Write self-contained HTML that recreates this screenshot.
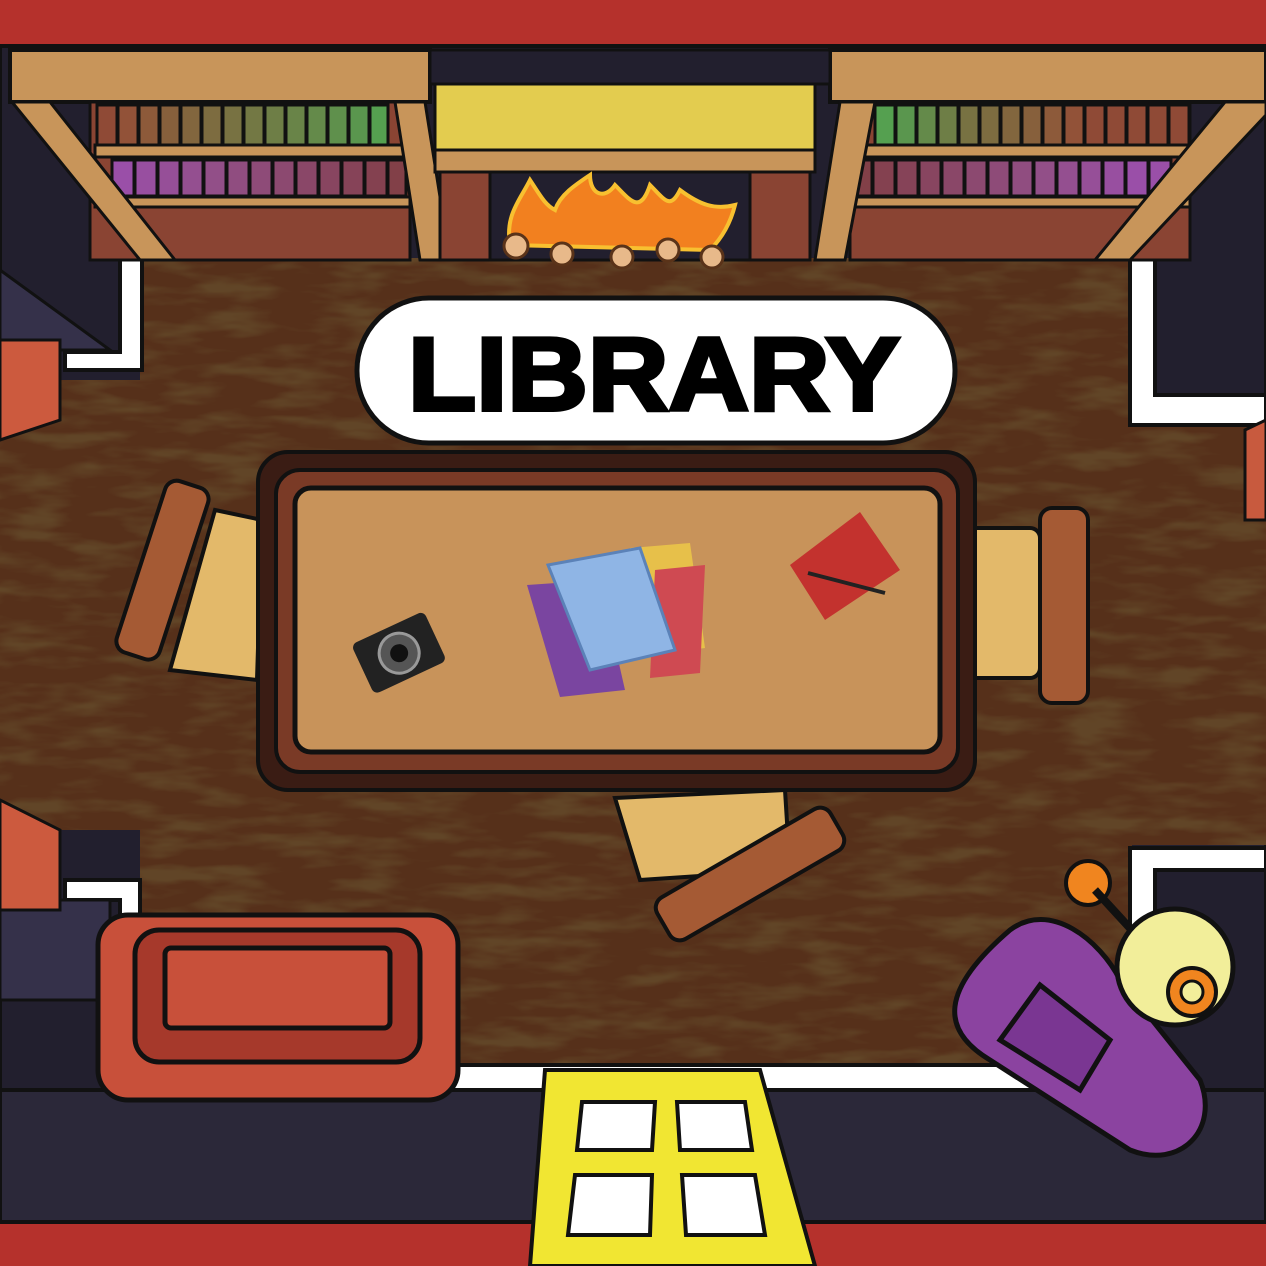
<!DOCTYPE html>
<html><head><meta charset="utf-8"><style>html,body{margin:0;padding:0;background:#b5312c}svg{display:block}</style></head><body>
<svg width="1266" height="1266" viewBox="0 0 1266 1266" xmlns="http://www.w3.org/2000/svg">
<defs>
<filter id="wood" x="0" y="0" width="100%" height="100%">
<feTurbulence type="fractalNoise" baseFrequency="0.015 0.06" numOctaves="3" seed="4"/>
<feColorMatrix type="matrix" values="0 0 0 0 0.12  0 0 0 0 0.06  0 0 0 0 0.02  0 0 0 3 -1.3"/>
</filter>
</defs>
<rect width="1266" height="1266" fill="#b5312c"/>
<rect x="0" y="45" width="1266" height="1193" fill="#221f2e" stroke="#111" stroke-width="4"/>
<rect x="140" y="258" width="992" height="815" fill="#56301a"/>
<rect x="140" y="258" width="992" height="815" filter="url(#wood)"/>
<rect x="0" y="380" width="140" height="450" fill="#56301a"/>
<rect x="0" y="380" width="140" height="450" filter="url(#wood)"/>
<rect x="1132" y="425" width="134" height="420" fill="#56301a"/>
<rect x="1132" y="425" width="134" height="420" filter="url(#wood)"/>
<path d="M120 240 L142 258 L142 370 L65 370 L65 352 L120 352Z" fill="#fff" stroke="#111" stroke-width="4"/>
<path d="M1130 258 L1155 240 L1155 395 L1266 395 L1266 425 L1130 425Z" fill="#fff" stroke="#111" stroke-width="4"/>
<path d="M1130 848 L1266 848 L1266 870 L1155 870 L1155 1060 L1130 1075Z" fill="#fff" stroke="#111" stroke-width="4"/>
<path d="M65 880 L140 880 L140 1075 L120 1075 L120 900 L65 900Z" fill="#fff" stroke="#111" stroke-width="4"/>
<path d="M140 1065 L1150 1065 L1150 1090 L140 1090Z" fill="#fff" stroke="#111" stroke-width="4"/>
<rect x="0" y="1090" width="1266" height="150" fill="#2b2839" stroke="#111" stroke-width="4"/>
<rect x="0" y="1222" width="1266" height="44" fill="#b5312c"/>
<line x1="0" y1="1222" x2="1266" y2="1222" stroke="#111" stroke-width="4"/>
<path d="M0 270 L110 350 L0 350Z" fill="#35314a" stroke="#111" stroke-width="3"/>
<path d="M0 900 L110 900 L110 1000 L0 1000Z" fill="#35314a" stroke="#111" stroke-width="3"/>
<path d="M0 340 L60 340 L60 420 L0 440Z" fill="#cc5a3e" stroke="#111" stroke-width="3"/>
<path d="M0 800 L60 830 L60 910 L0 910Z" fill="#cc5a3e" stroke="#111" stroke-width="3"/>
<path d="M1266 420 L1245 430 L1245 520 L1266 520Z" fill="#c85a3e" stroke="#111" stroke-width="3"/>
<rect x="10" y="50" width="420" height="52" fill="#c8955a" stroke="#111" stroke-width="4"/>
<rect x="830" y="50" width="436" height="52" fill="#c8955a" stroke="#111" stroke-width="4"/>
<rect x="90" y="102" width="320" height="158" fill="#8a4433" stroke="#111" stroke-width="3"/>
<rect x="850" y="102" width="340" height="158" fill="#8a4433" stroke="#111" stroke-width="3"/>
<g stroke="#111" stroke-width="3">
<rect x="97" y="105" width="20" height="40" fill="#8f4a36"/><rect x="118" y="105" width="20" height="40" fill="#925238"/><rect x="139" y="105" width="20" height="40" fill="#8d5a3a"/><rect x="160" y="105" width="20" height="40" fill="#87603c"/><rect x="181" y="105" width="20" height="40" fill="#82663e"/><rect x="202" y="105" width="20" height="40" fill="#7d6c40"/><rect x="223" y="105" width="20" height="40" fill="#787242"/><rect x="244" y="105" width="20" height="40" fill="#737844"/><rect x="265" y="105" width="20" height="40" fill="#6e7e46"/><rect x="286" y="105" width="20" height="40" fill="#698448"/><rect x="307" y="105" width="20" height="40" fill="#648a4a"/><rect x="328" y="105" width="20" height="40" fill="#5f904c"/><rect x="349" y="105" width="20" height="40" fill="#5a964e"/><rect x="370" y="105" width="18" height="40" fill="#55a050"/>
<rect x="875" y="105" width="20" height="40" fill="#55a050"/><rect x="896" y="105" width="20" height="40" fill="#5a964e"/><rect x="917" y="105" width="20" height="40" fill="#648a4a"/><rect x="938" y="105" width="20" height="40" fill="#6e7e46"/><rect x="959" y="105" width="20" height="40" fill="#787242"/><rect x="980" y="105" width="20" height="40" fill="#7d6c40"/><rect x="1001" y="105" width="20" height="40" fill="#82663e"/><rect x="1022" y="105" width="20" height="40" fill="#87603c"/><rect x="1043" y="105" width="20" height="40" fill="#8d5a3a"/><rect x="1064" y="105" width="20" height="40" fill="#925238"/><rect x="1085" y="105" width="20" height="40" fill="#8f4a36"/><rect x="1106" y="105" width="20" height="40" fill="#8f4a36"/><rect x="1127" y="105" width="20" height="40" fill="#8f4a36"/><rect x="1148" y="105" width="20" height="40" fill="#8f4a36"/><rect x="1169" y="105" width="20" height="40" fill="#8f4a36"/>
</g>
<rect x="95" y="145" width="315" height="12" fill="#c8955a" stroke="#111" stroke-width="3"/>
<rect x="850" y="145" width="340" height="12" fill="#c8955a" stroke="#111" stroke-width="3"/>
<g stroke="#111" stroke-width="3">
<rect x="112" y="160" width="22" height="36" fill="#9a4fa8"/><rect x="135" y="160" width="22" height="36" fill="#984fa0"/><rect x="158" y="160" width="22" height="36" fill="#964f98"/><rect x="181" y="160" width="22" height="36" fill="#944f90"/><rect x="204" y="160" width="22" height="36" fill="#924f88"/><rect x="227" y="160" width="22" height="36" fill="#904d80"/><rect x="250" y="160" width="22" height="36" fill="#8e4b78"/><rect x="273" y="160" width="22" height="36" fill="#8c4970"/><rect x="296" y="160" width="22" height="36" fill="#8a4768"/><rect x="319" y="160" width="22" height="36" fill="#884560"/><rect x="342" y="160" width="22" height="36" fill="#864358"/><rect x="365" y="160" width="22" height="36" fill="#844150"/><rect x="388" y="160" width="18" height="36" fill="#824048"/>
<rect x="850" y="160" width="22" height="36" fill="#824048"/><rect x="873" y="160" width="22" height="36" fill="#844150"/><rect x="896" y="160" width="22" height="36" fill="#864358"/><rect x="919" y="160" width="22" height="36" fill="#884560"/><rect x="942" y="160" width="22" height="36" fill="#8a4768"/><rect x="965" y="160" width="22" height="36" fill="#8c4970"/><rect x="988" y="160" width="22" height="36" fill="#8e4b78"/><rect x="1011" y="160" width="22" height="36" fill="#904d80"/><rect x="1034" y="160" width="22" height="36" fill="#924f88"/><rect x="1057" y="160" width="22" height="36" fill="#944f90"/><rect x="1080" y="160" width="22" height="36" fill="#964f98"/><rect x="1103" y="160" width="22" height="36" fill="#984fa0"/><rect x="1126" y="160" width="22" height="36" fill="#9a4fa8"/><rect x="1149" y="160" width="22" height="36" fill="#9a4fa8"/>
</g>
<rect x="95" y="197" width="315" height="10" fill="#c8955a" stroke="#111" stroke-width="3"/>
<rect x="850" y="197" width="340" height="10" fill="#c8955a" stroke="#111" stroke-width="3"/>
<path d="M12 102 L50 102 L175 260 L140 260Z" fill="#c8955a" stroke="#111" stroke-width="3"/>
<path d="M395 102 L425 102 L450 260 L420 260Z" fill="#c8955a" stroke="#111" stroke-width="3"/>
<path d="M840 102 L875 102 L845 260 L815 260Z" fill="#c8955a" stroke="#111" stroke-width="3"/>
<path d="M1225 102 L1266 102 L1266 115 L1130 260 L1095 260Z" fill="#c8955a" stroke="#111" stroke-width="3"/>
<rect x="430" y="50" width="400" height="34" fill="#221f2e" stroke="#111" stroke-width="3"/>
<rect x="435" y="84" width="380" height="66" fill="#e3cc4f" stroke="#111" stroke-width="3"/>
<rect x="435" y="150" width="380" height="22" fill="#c8955a" stroke="#111" stroke-width="3"/>
<rect x="440" y="172" width="50" height="88" fill="#8a4433" stroke="#111" stroke-width="3"/>
<rect x="750" y="172" width="60" height="88" fill="#8a4433" stroke="#111" stroke-width="3"/>
<rect x="490" y="172" width="260" height="88" fill="#221f2e" stroke="#111" stroke-width="3"/>
<path d="M510 245 C505 215 520 200 530 180 C540 195 545 205 555 210 C560 195 575 185 590 175 C590 195 605 200 615 185 C630 200 640 215 650 185 C665 200 670 210 680 190 C700 205 715 210 735 205 C730 225 720 240 710 250Z" fill="#f2801f" stroke="#f8c030" stroke-width="4"/>
<g fill="#e8b98a" stroke="#5a3319" stroke-width="3"><circle cx="516" cy="246" r="12"/><circle cx="562" cy="254" r="11"/><circle cx="622" cy="257" r="11"/><circle cx="668" cy="250" r="11"/><circle cx="712" cy="257" r="11"/></g>
<rect x="357" y="298" width="598" height="145" rx="72" fill="#fff" stroke="#111" stroke-width="5"/>
<text x="408" y="410" textLength="492" lengthAdjust="spacingAndGlyphs" font-family="Liberation Sans, sans-serif" font-weight="bold" font-size="104" fill="#000" stroke="#000" stroke-width="4">LIBRARY</text>
<g stroke="#111" stroke-width="4">
<path d="M215 510 L262 520 L257 680 L170 670Z" fill="#e3b96a"/>
<rect x="140" y="480" width="45" height="180" rx="12" transform="rotate(18 162 570)" fill="#a55a34"/>
<rect x="960" y="528" width="80" height="150" rx="10" fill="#e3b96a"/>
<rect x="1040" y="508" width="48" height="195" rx="12" fill="#a55a34"/>
<path d="M615 798 L785 790 L790 870 L640 880Z" fill="#e3b96a"/>
<rect x="650" y="850" width="200" height="48" rx="12" transform="rotate(-30 750 874)" fill="#a55a34"/>
</g>
<rect x="258" y="452" width="717" height="338" rx="30" fill="#3a1c14" stroke="#111" stroke-width="4"/>
<rect x="276" y="470" width="682" height="302" rx="24" fill="#7a3a26" stroke="#111" stroke-width="4"/>
<rect x="295" y="488" width="645" height="264" rx="16" fill="#c8935a" stroke="#111" stroke-width="5"/>
<g transform="rotate(-25 400 655)"><rect x="360" y="625" width="80" height="55" rx="6" fill="#222"/><circle cx="400" cy="653" r="20" fill="#555" stroke="#999" stroke-width="3"/><circle cx="400" cy="653" r="9" fill="#111"/></g>
<path d="M630 548 L690 543 L705 648 L650 655Z" fill="#e7c04a"/>
<path d="M655 570 L705 565 L700 673 L650 678Z" fill="#cf4a52"/>
<path d="M527 585 L600 580 L625 690 L560 697Z" fill="#7a45a0"/>
<path d="M548 565 L640 548 L675 650 L590 670Z" fill="#8fb5e5" stroke="#5b82b8" stroke-width="3"/>
<path d="M790 565 L860 512 L900 570 L825 620Z" fill="#c3322e"/>
<line x1="808" y1="573" x2="885" y2="593" stroke="#222" stroke-width="4"/>
<g stroke="#111" stroke-width="5">
<rect x="98" y="915" width="360" height="185" rx="30" fill="#c8503a"/>
<rect x="135" y="930" width="285" height="132" rx="24" fill="#a6392b"/>
<rect x="165" y="948" width="225" height="80" rx="6" fill="#c8503a"/>
</g>
<path d="M545 1070 L760 1070 L815 1266 L530 1266Z" fill="#f1e632" stroke="#111" stroke-width="4"/>
<g fill="#fff" stroke="#111" stroke-width="4"><path d="M582 1102 L655 1102 L652 1150 L577 1150Z"/><path d="M677 1102 L745 1102 L752 1150 L680 1150Z"/><path d="M575 1175 L652 1175 L650 1235 L568 1235Z"/><path d="M682 1175 L755 1175 L765 1235 L686 1235Z"/></g>
<circle cx="1088" cy="883" r="22" fill="#f0851f" stroke="#111" stroke-width="4"/>
<line x1="1095" y1="890" x2="1150" y2="950" stroke="#111" stroke-width="8"/>
<g stroke="#111" stroke-width="5">
<path d="M1010 930 C1050 900 1100 940 1120 980 L1200 1080 C1220 1130 1180 1170 1130 1150 L990 1060 C940 1030 940 990 1010 930Z" fill="#8b43a0"/>
<path d="M1040 985 L1110 1040 L1080 1090 L1000 1040Z" fill="#7a3692"/>
</g>
<circle cx="1175" cy="967" r="58" fill="#f2ee9a" stroke="#111" stroke-width="5"/>
<circle cx="1192" cy="992" r="24" fill="#f0851f" stroke="#111" stroke-width="4"/>
<circle cx="1192" cy="992" r="11" fill="#f2ee9a" stroke="#111" stroke-width="3"/>
<rect x="0" y="0" width="1266" height="45" fill="#b5312c"/>
<line x1="0" y1="46" x2="1266" y2="46" stroke="#111" stroke-width="4"/>
</svg>
</body></html>
